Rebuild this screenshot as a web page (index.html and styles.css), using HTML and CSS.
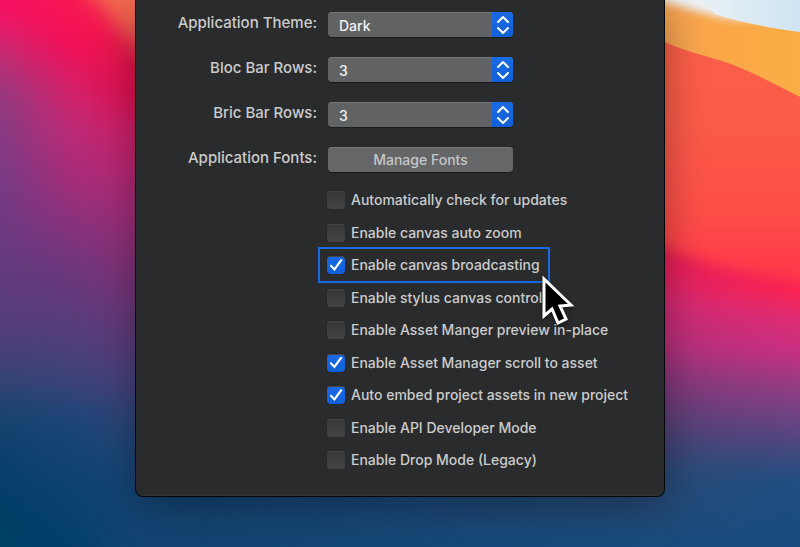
FILE: index.html
```html
<!DOCTYPE html>
<html lang="en">
<head>
<meta charset="utf-8">
<title>Preferences</title>
<link rel="stylesheet" href="styles.css">
</head>
<body>
<svg class="wallpaper" viewBox="0 0 800 547" preserveAspectRatio="none" aria-hidden="true">
  <defs>
    <linearGradient id="l0" x2="0" y2="547" gradientUnits="userSpaceOnUse">
      <stop offset="0" stop-color="#fa0c62"/><stop offset=".05" stop-color="#e81c6c"/><stop offset=".11" stop-color="#b93278"/><stop offset=".18" stop-color="#8f3a80"/><stop offset=".31" stop-color="#793b85"/><stop offset=".46" stop-color="#673b80"/><stop offset=".58" stop-color="#563d7b"/><stop offset=".68" stop-color="#3b4277"/><stop offset=".75" stop-color="#1b4470"/><stop offset=".84" stop-color="#0a3f6b"/><stop offset=".95" stop-color="#003f66"/>
    </linearGradient>
    <linearGradient id="l1" x2="0" y2="547" gradientUnits="userSpaceOnUse">
      <stop offset="0" stop-color="#f91853"/><stop offset=".08" stop-color="#f30b55"/><stop offset=".15" stop-color="#d92068"/><stop offset=".23" stop-color="#bd2b77"/><stop offset=".32" stop-color="#a52c79"/><stop offset=".4" stop-color="#8a327c"/><stop offset=".48" stop-color="#6f377c"/><stop offset=".58" stop-color="#593c7b"/><stop offset=".68" stop-color="#41427a"/><stop offset=".77" stop-color="#1b4577"/><stop offset=".88" stop-color="#0e4270"/><stop offset="1" stop-color="#003f69"/>
    </linearGradient>
    <linearGradient id="l2" x2="0" y2="547" gradientUnits="userSpaceOnUse">
      <stop offset="0" stop-color="#f0304a"/><stop offset=".08" stop-color="#ea1c4a"/><stop offset=".16" stop-color="#e20c4c"/><stop offset=".24" stop-color="#cf2068"/><stop offset=".37" stop-color="#a82c7a"/><stop offset=".5" stop-color="#803278"/><stop offset=".6" stop-color="#613a7a"/><stop offset=".69" stop-color="#4c407c"/><stop offset=".77" stop-color="#2d4678"/><stop offset=".87" stop-color="#164678"/><stop offset="1" stop-color="#134472"/>
    </linearGradient>
    <linearGradient id="r0" x2="0" y2="547" gradientUnits="userSpaceOnUse">
      <stop offset="0" stop-color="#e21c54"/><stop offset=".46" stop-color="#e41c54"/><stop offset=".5" stop-color="#e4215e"/><stop offset=".56" stop-color="#d02a75"/><stop offset=".63" stop-color="#b4307a"/><stop offset=".7" stop-color="#83387a"/><stop offset=".78" stop-color="#544176"/><stop offset=".86" stop-color="#2c4a78"/><stop offset="1" stop-color="#194c7c"/>
    </linearGradient>
    <linearGradient id="r1" x2="0" y2="547" gradientUnits="userSpaceOnUse">
      <stop offset="0" stop-color="#ff2850"/><stop offset=".53" stop-color="#fb2250"/><stop offset=".58" stop-color="#df2b70"/><stop offset=".64" stop-color="#c93082"/><stop offset=".7" stop-color="#983b84"/><stop offset=".76" stop-color="#6f4382"/><stop offset=".82" stop-color="#46487f"/><stop offset=".88" stop-color="#204e80"/><stop offset="1" stop-color="#184c80"/>
    </linearGradient>
    <linearGradient id="coral" x2="0" y2="300" gradientUnits="userSpaceOnUse"><stop offset="0" stop-color="#fa6048"/><stop offset=".4" stop-color="#fa5b48"/><stop offset=".7" stop-color="#fd4f47"/><stop offset="1" stop-color="#ff304b"/></linearGradient>
    <linearGradient id="amber"><stop offset="0" stop-color="#f4a158"/><stop offset=".5" stop-color="#fba748"/><stop offset="1" stop-color="#fbae45"/></linearGradient>
    <linearGradient id="sky" x2="1" y2="0"><stop offset="0" stop-color="#eaf1f5"/><stop offset="1" stop-color="#cfe4f4"/></linearGradient>
    <linearGradient id="rise"><stop offset="0" stop-color="#000"/><stop offset="1" stop-color="#fff"/></linearGradient>
    <mask id="m1" maskUnits="userSpaceOnUse" x="-60" y="-60" width="920" height="667"><rect y="-60" width="68" height="667" fill="url(#rise)"/><rect x="68" y="-60" width="800" height="667" fill="#fff"/></mask>
    <mask id="m2" maskUnits="userSpaceOnUse" x="-60" y="-60" width="920" height="667"><rect x="68" y="-60" width="67" height="667" fill="url(#rise)"/><rect x="135" y="-60" width="732" height="667" fill="#fff"/></mask>
    <mask id="m3"><rect x="665" width="135" height="547" fill="url(#rise)"/></mask>
    <mask id="m4"><rect x="200" width="440" height="547" fill="url(#rise)"/><rect x="640" width="160" height="547" fill="#fff"/></mask>
    <filter id="blend" color-interpolation-filters="sRGB" filterUnits="userSpaceOnUse" x="-60" y="-60" width="920" height="667"><feGaussianBlur stdDeviation="12"/></filter>
    <filter id="soft" color-interpolation-filters="sRGB" x="-20%" y="-100%" width="140%" height="300%"><feGaussianBlur stdDeviation="4"/></filter>
    <filter id="haze" color-interpolation-filters="sRGB" x="-50%" y="-50%" width="200%" height="200%"><feGaussianBlur stdDeviation="10"/></filter>
    <filter id="edge" color-interpolation-filters="sRGB" x="-20%" y="-20%" width="140%" height="140%"><feGaussianBlur stdDeviation="7"/></filter>
  </defs>
  <g filter="url(#blend)">
    <rect x="-60" y="-60" width="920" height="667" fill="url(#l0)"/>
    <rect x="-60" y="-60" width="920" height="667" fill="url(#l1)" mask="url(#m1)"/>
    <rect x="-60" y="-60" width="920" height="667" fill="url(#l2)" mask="url(#m2)"/>
  </g>
  <path d="M78 -30L90 -6C108 8 122 28 138 48L180 60V-30Z" fill="#f56a50" filter="url(#haze)"/>
  <rect width="800" height="547" fill="url(#r0)" mask="url(#m4)"/>
  <rect x="665" width="135" height="547" fill="url(#r1)" mask="url(#m3)"/>
  <path d="M600 -20V235L665 248C700 262 750 276 840 286V-20Z" fill="url(#coral)" filter="url(#edge)"/>
  <path d="M640 30L665 42C687 53 713 56 743 69C766 79 782 88 800 97V0H640Z" fill="url(#amber)"/>
  <path d="M640 -4L665 2C685 8 705 14 730 19L760 20V-20H640Z" fill="#eaf1f5" filter="url(#soft)"/>
  <path d="M700 0L715 14C743 23 770 28 800 32V0Z" fill="url(#sky)"/>
</svg>

<main class="window">
  <form class="prefs">
    <label class="name" for="theme">Application Theme:</label>
    <div class="picker">
      <select id="theme"><option>Dark</option><option>Light</option></select>
      <svg class="arrows" viewBox="0 0 21 25" aria-hidden="true"><path d="M6 10l5-5 5 5M6 16l5 5 5-5"/></svg>
    </div>
    <label class="name" for="bloc">Bloc Bar Rows:</label>
    <div class="picker">
      <select id="bloc"><option>3</option><option>4</option></select>
      <svg class="arrows" viewBox="0 0 21 25" aria-hidden="true"><path d="M6 10l5-5 5 5M6 16l5 5 5-5"/></svg>
    </div>
    <label class="name" for="bric">Bric Bar Rows:</label>
    <div class="picker">
      <select id="bric"><option>3</option><option>4</option></select>
      <svg class="arrows" viewBox="0 0 21 25" aria-hidden="true"><path d="M6 10l5-5 5 5M6 16l5 5 5-5"/></svg>
    </div>
    <label class="name" for="fonts">Application Fonts:</label>
    <button class="button" id="fonts" type="button">Manage Fonts</button>

    <div class="options">
      <label class="option"><input type="checkbox">Automatically check for updates</label>
      <label class="option"><input type="checkbox">Enable canvas auto zoom</label>
      <label class="option highlighted"><input type="checkbox" checked>Enable canvas broadcasting
        <svg class="cursor" viewBox="0 0 40 60" aria-hidden="true"><path d="M5 6V43L13 36L19 50L27 46L21 33L32 32Z"/></svg>
      </label>
      <label class="option"><input type="checkbox">Enable stylus canvas control</label>
      <label class="option"><input type="checkbox">Enable Asset Manger preview in-place</label>
      <label class="option"><input type="checkbox" checked>Enable Asset Manager scroll to asset</label>
      <label class="option"><input type="checkbox" checked>Auto embed project assets in new project</label>
      <label class="option"><input type="checkbox">Enable API Developer Mode</label>
      <label class="option"><input type="checkbox">Enable Drop Mode (Legacy)</label>
    </div>
  </form>
</main>
</body>
</html>
```

FILE: styles.css
```css
* { box-sizing: border-box; }

body {
  margin: 0;
  min-height: 100vh;
  overflow: hidden;
  background: #174a78;
  color: #cbcbcc;
  font: 500 14px/21px Inter, "Liberation Sans", sans-serif;
}

.wallpaper {
  position: absolute;
  inset: 0;
  z-index: -1;
  width: 100%;
  height: 100%;
}

.window {
  max-width: 530px;
  margin: 0 auto;
  padding: 12px 16px 27px;
  background: #2a2b2c;
  border: 1px solid #050607;
  border-top: 0;
  border-radius: 0 0 8px 8px;
  box-shadow: inset 0 -1px #343536, 0 10px 40px rgba(0, 0, 0, 0.35);
}

.prefs {
  display: grid;
  grid-template-columns: 165px 185px 1fr;
  gap: 20px 11px;
}

.name {
  grid-column: 1;
  justify-self: end;
  font-size: 15px;
}

.picker {
  position: relative;
  grid-column: 2;
}

select,
.button {
  display: block;
  width: 100%;
  height: 25px;
  margin: 0;
  border: 0;
  border-radius: 4px;
  background: #616264;
  box-shadow: inset 0 1px #757678, 0 1px 1px rgba(0, 0, 0, 0.4);
  font: inherit;
}

select {
  appearance: none;
  padding: 1px 28px 0 11px;
  color: #f0f0f0;
}

.button {
  grid-column: 2;
  padding: 0;
  background: #656668;
  color: #c6c6c8;
}

.arrows {
  position: absolute;
  top: 0;
  right: 0;
  width: 21px;
  height: 25px;
  border-radius: 0 4px 4px 0;
  background: linear-gradient(#1a6ae6, #1160d8);
  pointer-events: none;
}

.arrows path {
  fill: none;
  stroke: #fff;
  stroke-width: 2;
  stroke-linecap: round;
  stroke-linejoin: round;
}

.options {
  grid-column: 2 / 4;
  display: flex;
  flex-direction: column;
  align-items: flex-start;
  justify-content: space-between;
  min-height: 278px;
  margin-left: -1px;
  margin-top: -1px;
}

.option {
  position: relative;
  display: flex;
  align-items: center;
  gap: 6px;
  line-height: 18px;
  white-space: nowrap;
}

.option input {
  appearance: none;
  width: 18px;
  height: 18px;
  margin: 0;
  border-radius: 4px;
  background: linear-gradient(#353637, #444546);
  box-shadow: inset 0 1px #464748, 0 0 1px #1c1d1e;
}

.option input:checked {
  display: grid;
  place-items: center;
  background: linear-gradient(#1a6ae6, #1160d8);
}

.option input:checked::before {
  content: "";
  width: 13px;
  height: 12px;
  background: #fff;
  clip-path: polygon(0 57%, 12% 45%, 37% 73%, 86% 0, 100% 11%, 39% 100%);
}

.highlighted {
  z-index: 1;
  padding-right: 1px;
  outline: 2px solid #1968e4;
  outline-offset: 7px;
}

.cursor {
  position: absolute;
  top: 17px;
  right: -38px;
  width: 40px;
  height: 60px;
  overflow: visible;
  filter: drop-shadow(0 2px 2px rgba(0, 0, 0, 0.5));
  pointer-events: none;
}

.cursor path {
  fill: #000;
  stroke: #fff;
  stroke-width: 3;
}
```
